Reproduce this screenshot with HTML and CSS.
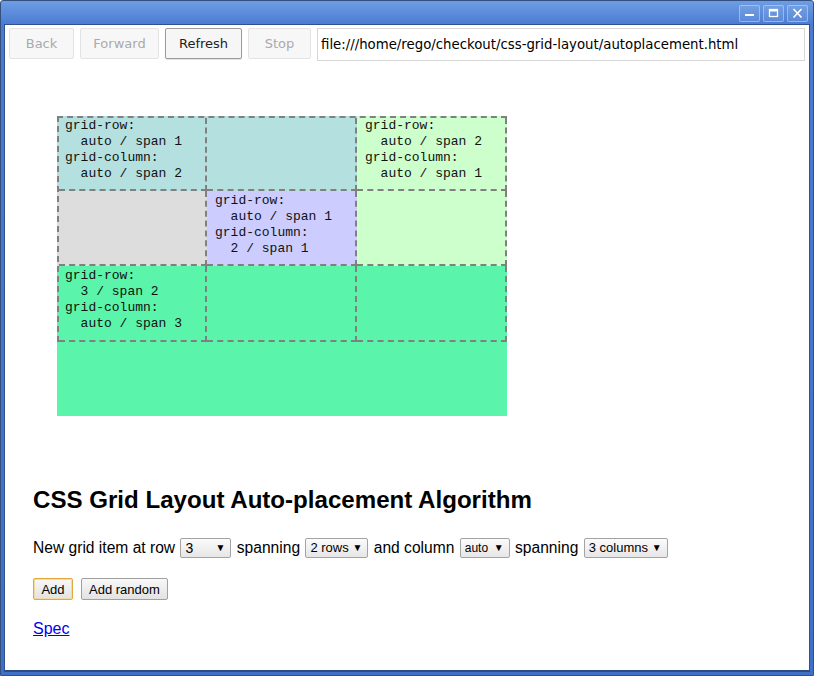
FILE: index.html
```html
<!DOCTYPE html>
<html>
<head>
<meta charset="utf-8">
<link rel="stylesheet" href="styles.css">
</head>
<body>
<div class="frame">
  <div class="titlebar">
    <div class="wbtns">
      <span class="wbtn"><svg width="21" height="17" viewBox="0 0 21 17"><rect x="6" y="9" width="9" height="2" fill="#fff"/></svg></span>
      <span class="wbtn"><svg width="21" height="17" viewBox="0 0 21 17"><rect x="6.5" y="4.5" width="8" height="7" fill="none" stroke="#fff" stroke-width="1.3"/><rect x="6.5" y="4.5" width="8" height="2" fill="#fff"/></svg></span>
      <span class="wbtn"><svg width="21" height="17" viewBox="0 0 21 17"><path d="M6.5 4 L14.5 12.5 M14.5 4 L6.5 12.5" stroke="#fff" stroke-width="1.6"/></svg></span>
    </div>
  </div>
  <div class="content">
    <div class="toolbar">
      <span class="tbtn disabled w-back">Back</span>
      <span class="tbtn disabled w-fwd">Forward</span>
      <span class="tbtn active w-ref">Refresh</span>
      <span class="tbtn disabled w-stop">Stop</span>
      <span class="url">file:///home/rego/checkout/css-grid-layout/autoplacement.html</span>
    </div>
    <div class="page">
      <div class="grid">
        <div class="item teal c1">grid-row:
  auto / span 1
grid-column:
  auto / span 2</div>
        <div class="item lgreen c2">grid-row:
  auto / span 2
grid-column:
  auto / span 1</div>
        <div class="item purple c3">grid-row:
  auto / span 1
grid-column:
  2 / span 1</div>
        <div class="item mint c4">grid-row:
  3 / span 2
grid-column:
  auto / span 3</div>
        <div class="cells">
          <span></span><span></span><span></span>
          <span></span><span></span><span></span>
          <span></span><span></span><span></span>
        </div>
      </div>
      <h1>CSS Grid Layout Auto-placement Algorithm</h1>
      <p class="controls">New grid item at row <span class="sel s1"><span>3</span><i>▼</i></span> spanning <span class="sel s2"><span>2 rows</span><i>▼</i></span> and column <span class="sel s3"><span>auto</span><i>▼</i></span> spanning <span class="sel s4"><span>3 columns</span><i>▼</i></span></p>
      <div class="buttons">
        <span class="btn focus">Add</span>
        <span class="btn">Add random</span>
      </div>
      <a class="spec" href="#">Spec</a>
    </div>
  </div>
</div>
</body>
</html>
```
FILE: styles.css
```css
html, body {
  margin: 0;
  padding: 0;
  width: 814px;
  height: 676px;
  overflow: hidden;
  background: #fff;
}
.frame {
  box-sizing: border-box;
  width: 814px;
  height: 676px;
  border: 1px solid #34507e;
  border-radius: 3px 3px 0 0;
  background: linear-gradient(#6e9de4 0px, #4a7bd1 24px, #3f6fc6 100%);
  display: flex;
  flex-direction: column;
  padding: 0 3px 3px 3px;
}
.titlebar {
  height: 23px;
  display: flex;
  justify-content: flex-end;
  align-items: flex-start;
  flex: none;
}
.wbtns {
  display: flex;
  gap: 3px;
  margin-top: 4px;
  margin-right: 2px;
}
.wbtn {
  display: block;
  width: 21px;
  height: 17px;
  box-sizing: border-box;
  border: 1px solid rgba(255,255,255,0.35);
  border-radius: 2px;
  background: rgba(255,255,255,0.08);
}
.wbtn svg { display: block; margin: -1px; }
.content {
  flex: 1;
  background: #fff;
  border: 1px solid #2f528f;
  border-bottom: 2px solid #2c4c86;
}
.toolbar {
  display: flex;
  align-items: flex-start;
  padding: 3px 0 0 4px;
  gap: 6px;
  font-family: "DejaVu Sans", sans-serif;
  font-size: 13px;
}
.tbtn {
  box-sizing: border-box;
  height: 31px;
  display: flex;
  align-items: center;
  justify-content: center;
  border: 1px solid #e3e3e3;
  border-radius: 2px;
  background: #f7f7f7;
  color: #aaa;
}
.tbtn.active {
  border-color: #9a9a9a;
  color: #222;
  background: #f6f6f6;
  box-shadow: 0 1px 1px rgba(0,0,0,0.12);
}
.w-back { width: 65px; }
.w-fwd { width: 79px; }
.w-ref { width: 77px; }
.w-stop { width: 63px; }
.url {
  box-sizing: border-box;
  height: 33px;
  width: 488px;
  border: 1px solid #d6d6d6;
  display: flex;
  align-items: center;
  padding-left: 3px;
  color: #000;
  font-size: 13.3px;
}
.page {
  padding: 0 0 0 28px;
  font-family: "Liberation Sans", Arial, sans-serif;
}
.grid {
  position: relative;
  margin: 55px 0 0 24px;
  width: 450px;
  height: 300px;
  background: #dddddd;
  display: grid;
  grid-template-columns: repeat(3, 150px);
  grid-template-rows: repeat(4, 75px);
}
.item {
  white-space: pre;
  font-family: "Liberation Mono", "Courier New", monospace;
  font-size: 13px;
  line-height: 16px;
  padding: 2px 0 0 8px;
  color: #111;
}
.teal { background: #b5e0e0; }
.lgreen { background: #ccffcc; }
.purple { background: #ccccff; }
.mint { background: #5af5aa; }
.c1 { grid-row: 1 / span 1; grid-column: 1 / span 2; }
.c2 { grid-row: 1 / span 2; grid-column: 3 / span 1; }
.c3 { grid-row: 2 / span 1; grid-column: 2 / span 1; }
.c4 { grid-row: 3 / span 2; grid-column: 1 / span 3; }
.cells {
  position: absolute;
  left: 0;
  top: 0;
  width: 450px;
  height: 226px;
  box-sizing: border-box;
  border-top: 2px dashed #808080;
  border-left: 2px dashed #808080;
  display: grid;
  grid-template-columns: 148px 150px 150px;
  grid-template-rows: 73px 75px 76px;
}
.cells span {
  border-right: 2px dashed #808080;
  border-bottom: 2px dashed #808080;
}
h1 {
  margin: 70px 0 0 0;
  font-size: 24.1px;
  line-height: 28px;
  font-weight: bold;
  color: #000;
}
.controls {
  margin: 24px 0 0 0;
  font-size: 15.6px;
  line-height: 20px;
  color: #000;
}
.sel {
  display: inline-flex;
  align-items: center;
  justify-content: space-between;
  box-sizing: border-box;
  height: 20px;
  vertical-align: top;
  border: 1px solid #a3a3a3;
  border-radius: 2px;
  background: linear-gradient(#fbfbfb, #e6e6e6);
  font-size: 13px;
  padding: 0 5px 0 4px;
  margin: 0 1px;
  color: #000;
}
.sel i {
  font-style: normal;
  font-size: 10px;
}
.s1 { width: 51px; font-size: 14px; }
.s2 { width: 63px; }
.s3 { width: 50px; font-size: 12px; }
.s4 { width: 84px; }
.buttons {
  display: flex;
  gap: 8px;
  margin-top: 20px;
}
.btn {
  box-sizing: border-box;
  height: 22px;
  display: flex;
  align-items: center;
  justify-content: center;
  padding: 0 7px;
  border: 1px solid #a0a0a0;
  border-radius: 2px;
  background: linear-gradient(#f8f8f8, #e2e2e2);
  font-size: 13px;
  color: #000;
}
.btn.focus {
  width: 40px;
  border: 1px solid #e5a93b;
  box-shadow: inset 0 0 0 1px #f3d9a4;
}
.spec {
  display: inline-block;
  margin-top: 19px;
  font-size: 16px;
  line-height: 20px;
  color: #0000ee;
  text-decoration: underline;
}
```
